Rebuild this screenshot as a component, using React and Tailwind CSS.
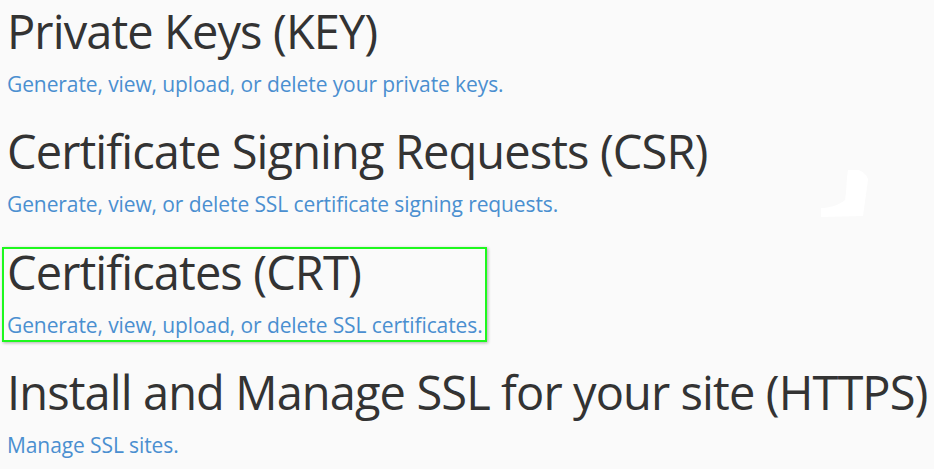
const sections = [
    { title: 'Private Keys (KEY)', desc: 'Generate, view, upload, or delete your private keys.' },
    { title: 'Certificate Signing Requests (CSR)', desc: 'Generate, view, or delete SSL certificate signing requests.' },
    { title: 'Certificates (CRT)', desc: 'Generate, view, upload, or delete SSL certificates.', active: true },
    { title: 'Install and Manage SSL for your site (HTTPS)', desc: 'Manage SSL sites.' },
];

const App = () => {
    return (
        <div className="relative w-[934px] h-[469px] overflow-hidden bg-[#fafafa] text-[#333]" style={{ fontFamily: '"Open Sans", sans-serif' }}>
            <div className="flex flex-col gap-[25px] pt-[6px]">
                {sections.map((s) => (
                    <div key={s.title}
                        className={`w-fit ml-[2px] pl-[3px] pr-[2px] border-2 ${s.active ? 'border-[#1ef81e] shadow-[1px_1px_3px_rgba(0,0,0,0.3)]' : 'border-transparent'}`}>
                        <h2 className="text-[47px] leading-[46px] font-normal tracking-[-0.9px] whitespace-nowrap">{s.title}</h2>
                        <a href="#" className="block mt-[16px] text-[21px] leading-[1.4] tracking-[-0.1px] text-[#4a8fd0] whitespace-nowrap">{s.desc}</a>
                    </div>
                ))}
            </div>

            {/* stray white blob */}
            <svg className="absolute left-[818px] top-[168px]" width="54" height="52" viewBox="0 0 54 52">
                <path d="M30 2 L40 2 C45 3 50 8 50 12 L45 48 L3 49 L3 40 C10 40 20 38 27 32 C29 22 28 12 30 2 Z" fill="#ffffff" />
            </svg>
        </div>
    );
};

export default App;
